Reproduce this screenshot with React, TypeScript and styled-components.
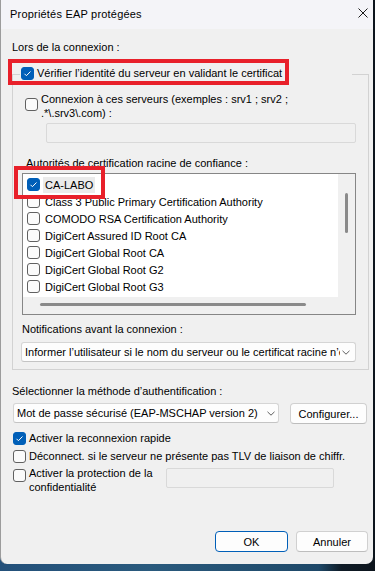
import styled, { createGlobalStyle } from 'styled-components';

const GlobalStyle = createGlobalStyle`
  html, body {
    margin: 0;
    padding: 0;
  }
  body {
    width: 375px;
    height: 571px;
    overflow: hidden;
    background: linear-gradient(90deg, #23507a 0%, #2a5a7d 40%, #1e4868 85%, #0f1b26 91%, #0c141c 100%);
    font-family: "Liberation Sans", Arial, sans-serif;
    font-size: 11px;
    color: #000;
  }
`;

const Window = styled.div`
  position: relative;
  width: 373px;
  height: 564px;
  box-sizing: border-box;
  background: #f0f0f0;
  border-left: 1px solid #9c9c9c;
  border-radius: 0 0 7px 7px;
  display: flex;
  flex-direction: column;
  overflow: hidden;
`;

const TitleBar = styled.div`
  height: 29px;
  flex: none;
  display: flex;
  align-items: flex-start;
  background: #f4f4f8;
  padding-left: 9px;
`;

const Title = styled.span`
  line-height: 29px;
  letter-spacing: 0.2px;
`;

const CloseIcon = styled.svg`
  margin: 8px 5px 0 auto;
`;

const Content = styled.div`
  flex: 1;
  display: flex;
  flex-direction: column;
  padding: 0 4px 12px 11px;
`;

const Label = styled.div<{ $top: number; $left?: number }>`
  line-height: 14px;
  margin-top: ${(p) => p.$top}px;
  margin-left: ${(p) => p.$left ?? 0}px;
  white-space: nowrap;
`;

const Group = styled.fieldset`
  margin: 12px 0 0 0;
  width: 357px;
  box-sizing: border-box;
  min-width: 0;
  border: 1px solid #d2d2d2;
  padding: 0 12px 7px 9px;
  display: flex;
  flex-direction: column;
`;

const Legend = styled.legend`
  width: 332px;
  box-sizing: border-box;
  margin-left: -2px;
  padding: 0 0 2px 1px;
  display: flex;
  align-items: center;
  gap: 3px;
  line-height: 14px;
  background: #f0f0f0;
`;

const Box = styled.span<{ $checked?: boolean; $top?: number; $left?: number }>`
  flex: none;
  box-sizing: border-box;
  width: 13px;
  height: 13px;
  margin-top: ${(p) => p.$top ?? 0}px;
  margin-left: ${(p) => p.$left ?? 0}px;
  border-radius: 3px;
  border: 1px solid ${(p) => (p.$checked ? '#005fb8' : '#616161')};
  background: ${(p) => (p.$checked ? '#005fb8' : '#fbfbfb')};
  display: flex;
  align-items: center;
  justify-content: center;
`;

const CheckRow = styled.div<{ $top: number; $left?: number }>`
  display: flex;
  align-items: flex-start;
  gap: 3px;
  margin-top: ${(p) => p.$top}px;
  margin-left: ${(p) => p.$left ?? 0}px;
  line-height: 14px;
`;

const CheckText = styled.span<{ $width?: number }>`
  ${(p) => (p.$width ? `width: ${p.$width}px; flex: none;` : 'white-space: nowrap;')}
`;

const Field = styled.div<{ $width: number; $top: number; $left?: number }>`
  box-sizing: border-box;
  width: ${(p) => p.$width}px;
  height: 20px;
  flex: none;
  margin-top: ${(p) => p.$top}px;
  margin-left: ${(p) => p.$left ?? 0}px;
  border: 1px solid #d9d9d9;
  border-radius: 2px;
  background: #f0f0f0;
`;

const ListBox = styled.div`
  margin-top: 3px;
  width: 334px;
  height: 142px;
  box-sizing: border-box;
  border: 1px solid #868686;
  display: grid;
  grid-template-columns: 1fr 17px;
  grid-template-rows: 1fr 17px;
  background: #f0f0f0;
`;

const Items = styled.div`
  background: #fff;
  padding-top: 2px;
  overflow: hidden;
`;

const Item = styled.div`
  height: 17px;
  display: flex;
  align-items: center;
  padding-left: 4px;
  gap: 3px;
  white-space: nowrap;
`;

const ItemText = styled.span<{ $selected?: boolean }>`
  line-height: 16px;
  padding: 0 2px;
  background: ${(p) => (p.$selected ? '#ebebeb' : 'transparent')};
`;

const VScroll = styled.div`
  display: flex;
  justify-content: flex-start;
`;

const VThumb = styled.div`
  width: 3px;
  height: 40px;
  margin: 19px 0 0 7px;
  border-radius: 2px;
  background: #8a8a8a;
`;

const HThumb = styled.div`
  width: 266px;
  height: 3px;
  margin: 6px 0 0 17px;
  border-radius: 2px;
  background: #8a8a8a;
`;

const Combo = styled.div<{ $width: number; $top: number; $left?: number; $pl: number; $pr: number }>`
  box-sizing: border-box;
  width: ${(p) => p.$width}px;
  height: 20px;
  flex: none;
  margin-top: ${(p) => p.$top}px;
  margin-left: ${(p) => p.$left ?? 0}px;
  padding: 0 ${(p) => p.$pr}px 0 ${(p) => p.$pl}px;
  border: 1px solid #d5d5d5;
  border-bottom-color: #c4c4c4;
  border-radius: 3px;
  background: #fdfdfd;
  display: flex;
  align-items: center;
  gap: 2px;
`;

const ComboText = styled.span`
  flex: 1;
  overflow: hidden;
  white-space: nowrap;
  line-height: 16px;
`;

const AuthRow = styled.div`
  display: flex;
  gap: 11px;
  margin-top: 5px;
`;

const Button = styled.div<{ $width: number; $default?: boolean }>`
  box-sizing: border-box;
  width: ${(p) => p.$width}px;
  height: 21px;
  flex: none;
  display: flex;
  align-items: center;
  justify-content: center;
  border: 1px solid ${(p) => (p.$default ? '#005fb8' : '#d0d0d0')};
  border-bottom-color: ${(p) => (p.$default ? '#005fb8' : '#bdbdbd')};
  border-radius: 4px;
  background: #fdfdfd;
`;

const ProtectRow = styled.div`
  display: flex;
  align-items: flex-start;
  margin-top: 3px;
`;

const Footer = styled.div`
  margin-top: auto;
  display: flex;
  justify-content: flex-end;
  gap: 8px;
  padding-right: 1px;
`;

const Mark = styled.div<{ $left: number; $top: number; $w: number; $h: number }>`
  position: absolute;
  left: ${(p) => p.$left}px;
  top: ${(p) => p.$top}px;
  width: ${(p) => p.$w}px;
  height: ${(p) => p.$h}px;
  box-sizing: border-box;
  border: 4.5px solid #e8202a;
  pointer-events: none;
`;

const CheckBox = ({ checked, top, left }: { checked?: boolean; top?: number; left?: number }) => (
  <Box $checked={checked} $top={top} $left={left}>
    {checked && (
      <svg width="11" height="11" viewBox="0 0 11 11">
        <path d="M2.5 5.8 L4.4 7.7 L8.5 3.5" fill="none" stroke="#fff" strokeWidth="1" />
      </svg>
    )}
  </Box>
);

const Chevron = () => (
  <svg width="8" height="5" viewBox="0 0 8 5" style={{ flex: 'none' }}>
    <polyline points="0.5,0.8 4,4.2 7.5,0.8" fill="none" stroke="#5d5d5d" strokeWidth="1" />
  </svg>
);

const authorities = [
  'CA-LABO',
  'Class 3 Public Primary Certification Authority',
  'COMODO RSA Certification Authority',
  'DigiCert Assured ID Root CA',
  'DigiCert Global Root CA',
  'DigiCert Global Root G2',
  'DigiCert Global Root G3',
];

export default function App() {
  return (
    <>
      <GlobalStyle />
      <Window>
        <TitleBar>
          <Title>Propriétés EAP protégées</Title>
          <CloseIcon width="10" height="10" viewBox="0 0 10 10">
            <path d="M0.5 0.5 L9.5 9.5 M9.5 0.5 L0.5 9.5" stroke="#1a1a1a" strokeWidth="1" />
          </CloseIcon>
        </TitleBar>
        <Content>
          <Label $top={11}>Lors de la connexion :</Label>
          <Group>
            <Legend>
              <CheckBox checked />
              <span>Vérifier l’identité du serveur en validant le certificat</span>
            </Legend>
            <CheckRow $top={10} $left={3}>
              <CheckBox top={6} />
              <CheckText>
                Connexion à ces serveurs (exemples : srv1 ; srv2 ;
                <br />
                .*\.srv3\.com) :
              </CheckText>
            </CheckRow>
            <Field $width={310} $top={3} $left={24} />
            <Label $top={13} $left={4}>
              Autorités de certification racine de confiance :
            </Label>
            <ListBox>
              <Items>
                {authorities.map((name, i) => (
                  <Item key={name}>
                    <CheckBox checked={i === 0} />
                    <ItemText $selected={i === 0}>{name}</ItemText>
                  </Item>
                ))}
              </Items>
              <VScroll>
                <VThumb />
              </VScroll>
              <div>
                <HThumb />
              </div>
              <div />
            </ListBox>
            <Label $top={7}>Notifications avant la connexion :</Label>
            <Combo $width={335} $top={6} $left={-1} $pl={3} $pr={5}>
              <ComboText>Informer l’utilisateur si le nom du serveur ou le certificat racine n’é</ComboText>
              <Chevron />
            </Combo>
          </Group>
          <Label $top={14}>Sélectionner la méthode d’authentification :</Label>
          <AuthRow>
            <Combo $width={266} $top={0} $left={1} $pl={3} $pr={3}>
              <ComboText>Mot de passe sécurisé (EAP-MSCHAP version 2)</ComboText>
              <Chevron />
            </Combo>
            <Button $width={77}>Configurer...</Button>
          </AuthRow>
          <CheckRow $top={7} $left={1}>
            <CheckBox checked top={1} />
            <CheckText>Activer la reconnexion rapide</CheckText>
          </CheckRow>
          <CheckRow $top={4} $left={1}>
            <CheckBox top={1} />
            <CheckText>Déconnect. si le serveur ne présente pas TLV de liaison de chiffr.</CheckText>
          </CheckRow>
          <ProtectRow>
            <CheckRow $top={0} $left={1}>
              <CheckBox top={3} />
              <CheckText $width={137}>
                Activer la protection de la
                <br />
                confidentialité
              </CheckText>
            </CheckRow>
            <Field $width={168} $top={2} />
          </ProtectRow>
          <Footer>
            <Button $width={73} $default>
              OK
            </Button>
            <Button $width={72}>Annuler</Button>
          </Footer>
        </Content>
        <Mark $left={7} $top={59} $w={281} $h={26} />
        <Mark $left={13} $top={166} $w={91} $h={33} />
      </Window>
    </>
  );
}
